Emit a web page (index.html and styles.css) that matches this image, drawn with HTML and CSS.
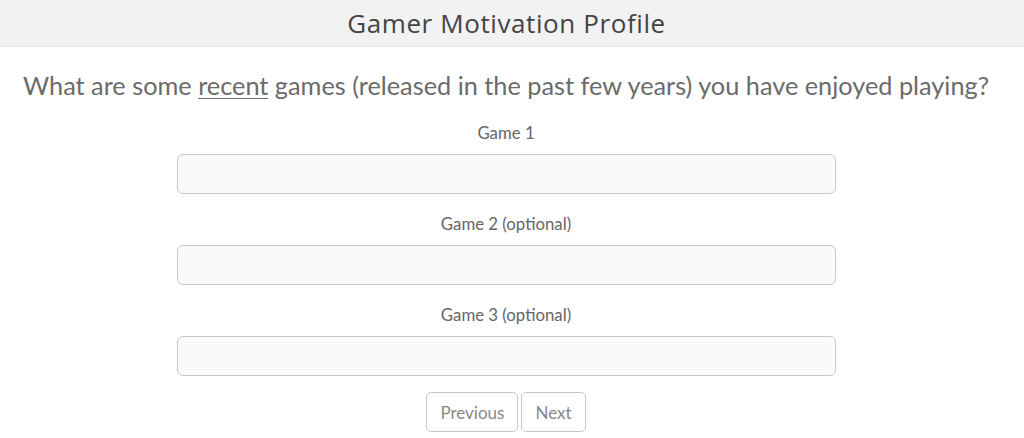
FILE: index.html
```html
<!DOCTYPE html>
<html>
<head>
<meta charset="utf-8">
<link rel="stylesheet" href="styles.css">
</head>
<body>
<header class="topbar"><span class="title">Gamer Motivation Profile</span></header>
<main class="content">
  <h1 class="question">What are some <u>recent</u> games (released in the past few years) you have enjoyed playing?</h1>
  <form class="games">
    <div class="field">
      <label class="label">Game 1</label>
      <input class="input" type="text">
    </div>
    <div class="field">
      <label class="label">Game 2 (optional)</label>
      <input class="input" type="text">
    </div>
    <div class="field">
      <label class="label">Game 3 (optional)</label>
      <input class="input" type="text">
    </div>
    <div class="actions">
      <button type="button" class="btn">Previous</button>
      <button type="button" class="btn">Next</button>
    </div>
  </form>
</main>
</body>
</html>
```
FILE: styles.css
```css
html, body {
  margin: 0;
  padding: 0;
  background: #fff;
}
body {
  font-family: Lato, "Open Sans", sans-serif;
  color: #666;
}
.topbar {
  height: 46px;
  background: #f2f2f2;
  border-bottom: 1px solid #e4e4e4;
  display: flex;
  align-items: center;
  justify-content: center;
  padding-right: 11px;
}
.title {
  font-family: "Open Sans", sans-serif;
  font-size: 26px;
  letter-spacing: 0.6px;
  color: #444;
}
.content {
  display: flex;
  flex-direction: column;
  align-items: center;
  padding-right: 12px;
}
.question {
  margin: 21px 0 0;
  font-size: 25.3px;
  line-height: 34px;
  font-weight: 400;
  color: #6b6b6b;
  text-align: center;
}
.question u {
  text-decoration-thickness: 1px;
  text-underline-offset: 3px;
}
.games {
  width: 659px;
  display: flex;
  flex-direction: column;
  margin-top: 20px;
}
.field {
  display: flex;
  flex-direction: column;
  align-items: center;
}
.field + .field {
  margin-top: 19px;
}
.label {
  font-size: 16.8px;
  line-height: 21px;
  margin-bottom: 11px;
  color: #666;
}
.input {
  box-sizing: border-box;
  width: 100%;
  height: 40px;
  border: 1px solid #c8c8c8;
  border-radius: 6px;
  background: #fafafa;
  margin: 0;
}
.actions {
  display: flex;
  justify-content: center;
  gap: 3px;
  margin-top: 16px;
}
.btn {
  box-sizing: border-box;
  height: 40px;
  padding: 0 13px;
  border: 1px solid #c8c8c8;
  border-radius: 5px;
  background: #fff;
  font-family: Lato, sans-serif;
  font-size: 17px;
  color: #888;
}
```
